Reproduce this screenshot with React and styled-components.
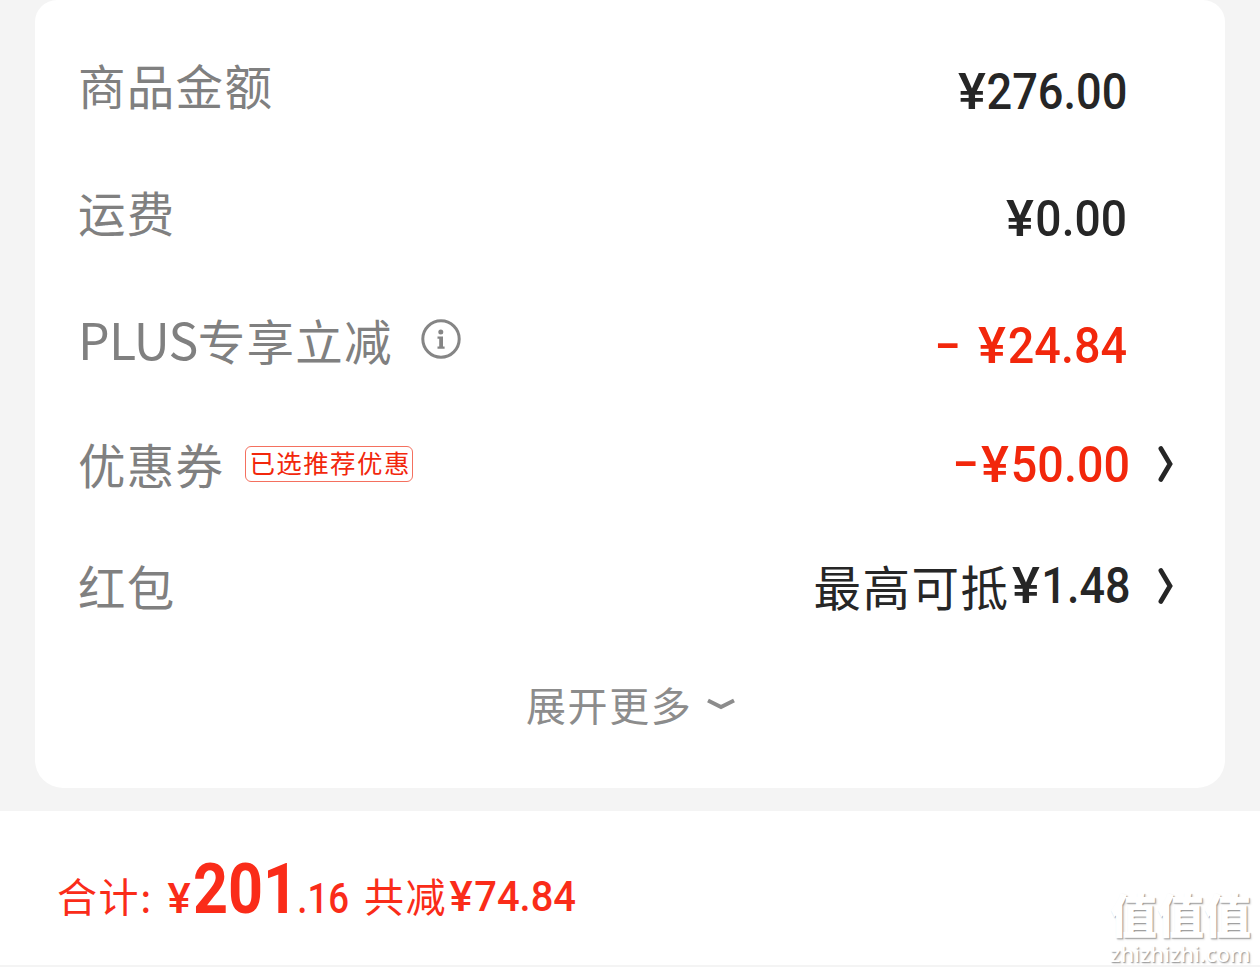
import React from 'react';
import styled, { createGlobalStyle } from 'styled-components';

const GlobalStyle = createGlobalStyle`
  body {
    margin: 0;
    background: #fff;
    font-family: "Noto Sans CJK SC", sans-serif;
  }
`;

const Page = styled.div`
  position: relative;
  width: 1260px;
  height: 972px;
  overflow: hidden;
  background: #fff;
`;

const CardArea = styled.div`
  height: 811px;
  padding: 0 35px;
  box-sizing: border-box;
  background: #f4f4f4;
`;

const Card = styled.div`
  height: 788px;
  padding: 21px 49px 0 43px;
  box-sizing: border-box;
  background: #fff;
  border-radius: 22px 22px 28px 28px;
`;

const Row = styled.div`
  display: flex;
  align-items: center;
  height: ${props => props.height}px;
`;

const Label = styled.span`
  font-size: 47.5px;
  line-height: 60px;
  letter-spacing: 1.3px;
  color: #808080;
  white-space: nowrap;
`;

const Latin = styled.span`
  font-size: 50px;
  letter-spacing: -0.7px;
`;

const InfoIcon = styled.svg`
  width: 42px;
  height: 42px;
  margin: 1px 0 0 27px;
`;

const Tag = styled.span`
  width: 168px;
  height: 36px;
  margin-left: 21px;
  padding-left: 3px;
  box-sizing: border-box;
  border: 1px solid #f4705f;
  border-radius: 6px;
  font-size: 25.5px;
  line-height: 29px;
  letter-spacing: 1.4px;
  white-space: nowrap;
  color: #f2270c;
`;

const Value = styled.div`
  display: flex;
  align-items: center;
  margin-left: auto;
  margin-right: ${props => (props.$arrow ? 0 : 49)}px;
  padding-top: ${props => (props.$arrow ? 0 : 15)}px;
  color: ${props => (props.$red ? '#f2270c' : '#262626')};
`;

const Hint = styled.span`
  font-size: 47.5px;
  line-height: 60px;
  letter-spacing: 1.5px;
`;

const Figure = styled.span`
  display: flex;
  flex: none;
  font-family: Roboto, sans-serif;
  font-size: ${props => props.$size || 50.5}px;
  line-height: 60px;
  font-weight: 500;
  white-space: nowrap;
`;

const Minus = styled(Figure)`
  justify-content: center;
  width: 20px;
  margin-right: ${props => props.$gap}px;
  transform: translateY(-2px) scaleX(1.5);
`;

const Yen = styled(Figure)`
  justify-content: center;
  width: ${props => props.$width || 32}px;
  transform: translateY(${props => -(props.$lift || 0)}px) scaleX(1.04);
`;

// digits are condensed towards their right edge
const Digits = styled(Figure)`
  justify-content: flex-end;
  width: ${props => props.$width}px;
  font-weight: ${props => props.$weight || 540};
  transform: translateY(${props => -(props.$lift || 0)}px) scaleX(${props => props.$scale || 0.92});
  transform-origin: right center;
`;

const Arrow = styled.svg`
  width: 20px;
  height: 40px;
  margin-left: 26px;
`;

const More = styled.div`
  display: flex;
  align-items: center;
  height: 60px;
  margin: 28px 0 0 448px;
  font-size: 40px;
  letter-spacing: 1.6px;
  color: #8c8c8c;
`;

const MoreIcon = styled.svg`
  width: 32px;
  height: 16px;
  margin: 0 0 1px 13px;
`;

const Footer = styled.div`
  display: flex;
  align-items: baseline;
  height: 156px;
  padding: 48px 0 0 57px;
  box-sizing: border-box;
  border-bottom: 2px solid #f4f4f4;
  color: #fa2c19;
`;

const FooterText = styled.span`
  flex: none;
  width: ${props => props.$width}px;
  padding-left: ${props => props.$indent || 0}px;
  font-size: 40px;
  line-height: 60px;
  letter-spacing: 1.6px;
  white-space: nowrap;
  transform: translateY(-1px);
`;

const Watermark = styled.div`
  position: absolute;
  right: 7px;
  bottom: 4px;
  width: 143px;
  color: #fff;
  white-space: nowrap;
  text-shadow: 1px 1px 1px rgba(0, 0, 0, 0.34), 2px 2px 2px rgba(0, 0, 0, 0.1);
`;

const WatermarkTitle = styled.div`
  font-size: 47px;
  line-height: 54px;
  font-weight: 900;
`;

const WatermarkUrl = styled.div`
  font-family: "Noto Sans", sans-serif;
  font-size: 21.8px;
  line-height: 28px;
  font-weight: 500;
`;

const ROWS = [
  { label: '商品金额', digits: '276.00', width: 139.5, scale: 0.895, height: 127 },
  { label: '运费', digits: '0.00', width: 91, scale: 0.915, height: 127 },
  {
    latin: 'PLUS', label: '专享立减', digits: '24.84', width: 119, scale: 0.925, height: 127,
    red: true, info: true, minusGap: 18,
  },
  {
    label: '优惠券', digits: '50.00', width: 119, scale: 0.925, height: 124,
    red: true, arrow: true, minusGap: 3, lift: -1, tag: '已选推荐优惠',
  },
  { label: '红包', digits: '1.48', width: 88.5, scale: 0.89, height: 120, arrow: true, hint: '最高可抵' },
];

const PriceRow = ({ row }) => (
  <Row height={row.height}>
    <Label>
      {row.latin && <Latin>{row.latin}</Latin>}
      {row.label}
    </Label>
    {row.info && (
      <InfoIcon viewBox="0 0 42 42" fill="none">
        <circle cx="21" cy="21" r="18.2" stroke="#858585" strokeWidth="3" />
        <circle cx="20.8" cy="14" r="2.5" fill="#858585" />
        <path d="M17.5 19.6H21.8V29M17.5 29.6H24.6" stroke="#858585" strokeWidth="2.4" />
        <path d="M21 19V30" stroke="#858585" strokeWidth="3.6" />
      </InfoIcon>
    )}
    {row.tag && <Tag>{row.tag}</Tag>}
    <Value $red={row.red} $arrow={row.arrow}>
      {row.hint && <Hint>{row.hint}</Hint>}
      {row.minusGap && <Minus $gap={row.minusGap}>-</Minus>}
      <Yen $lift={row.lift}>¥</Yen>
      <Digits $width={row.width} $scale={row.scale} $lift={row.lift}>{row.digits}</Digits>
      {row.arrow && (
        <Arrow viewBox="0 0 20 40" fill="none">
          <path d="M4.8 4.5L14 20L4.8 35.5" stroke="#262626" strokeWidth="4.8" strokeLinecap="round" />
        </Arrow>
      )}
    </Value>
  </Row>
);

export default function App() {
  return (
    <Page>
      <GlobalStyle />
      <CardArea>
        <Card>
          {ROWS.map(row => <PriceRow key={row.label} row={row} />)}
          <More>
            展开更多
            <MoreIcon viewBox="0 0 32 16" fill="none">
              <path d="M3 4.5L16 11L29 4.5" stroke="#8c8c8c" strokeWidth="4" />
            </MoreIcon>
          </More>
        </Card>
      </CardArea>
      <Footer>
        <FooterText $width={108}>合计:</FooterText>
        <Yen $size={42} $width={28}>¥</Yen>
        <Digits $size={71} $width={105} $scale={0.86} $weight={700}>201</Digits>
        <Digits $size={42} $width={51} $scale={0.87}>.16</Digits>
        <FooterText $width={83} $indent={15}>共减</FooterText>
        <Yen $size={42} $width={28} $lift={2}>¥</Yen>
        <Digits $size={42} $width={101} $scale={0.95} $lift={2}>74.84</Digits>
      </Footer>
      <Watermark>
        <WatermarkTitle>值值值</WatermarkTitle>
        <WatermarkUrl>zhizhizhi.com</WatermarkUrl>
      </Watermark>
    </Page>
  );
}
